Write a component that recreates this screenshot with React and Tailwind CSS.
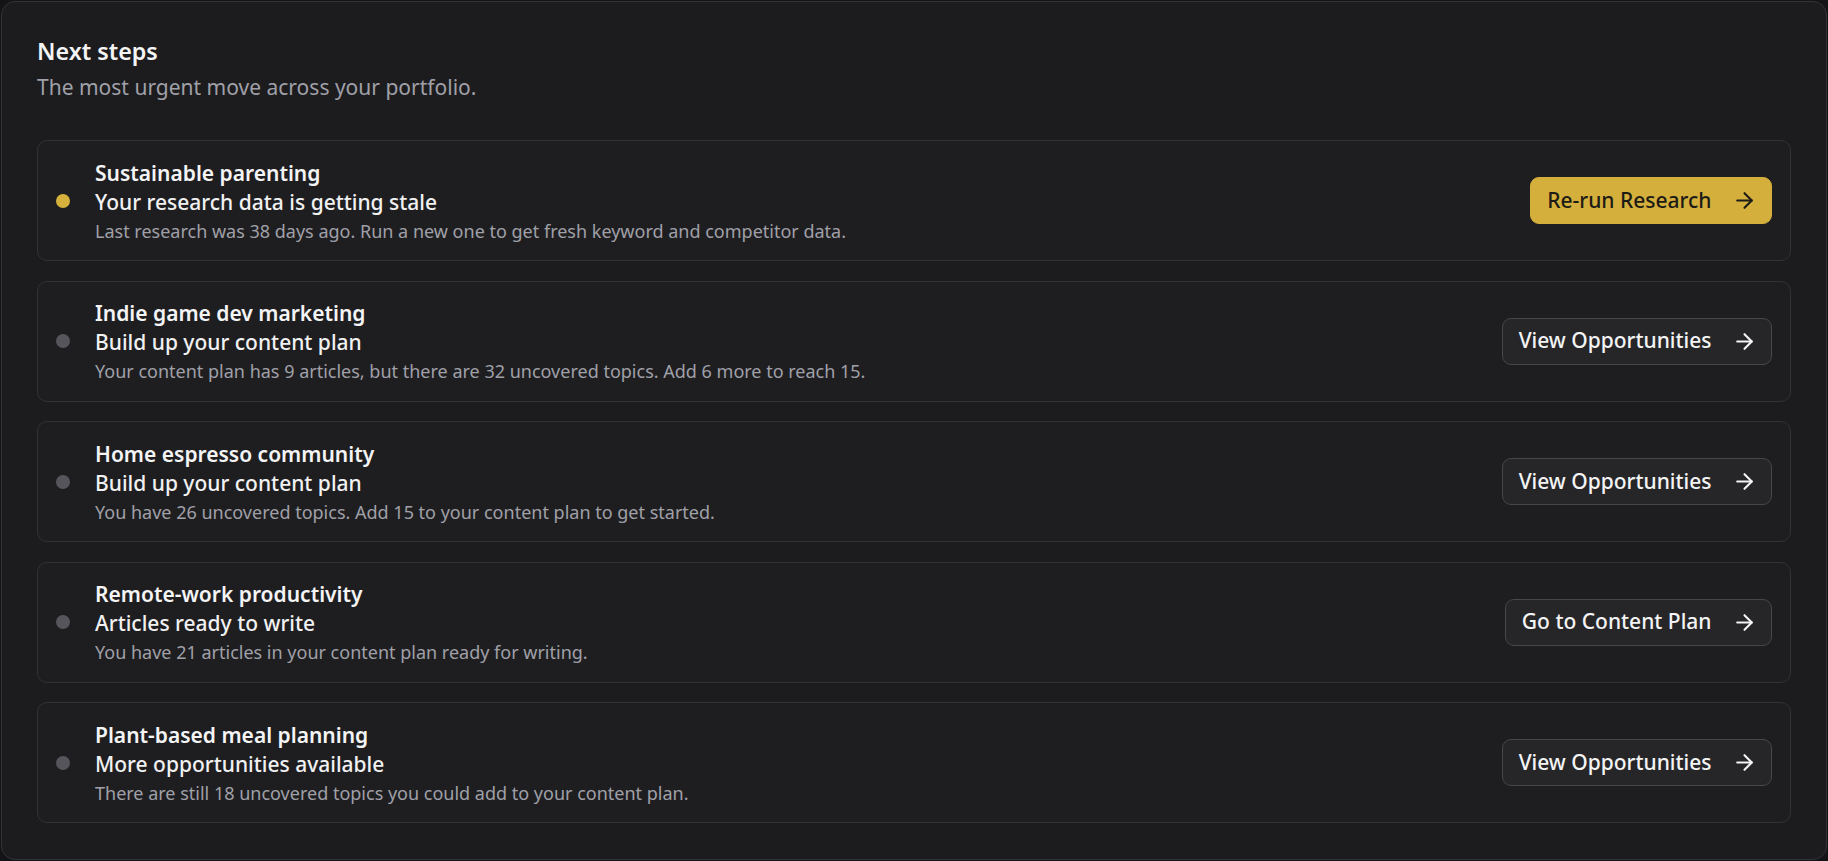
import React from "react";
import { ArrowRight } from "lucide-react";

const steps = [
  {
    project: "Sustainable parenting",
    headline: "Your research data is getting stale",
    detail:
      "Last research was 38 days ago. Run a new one to get fresh keyword and competitor data.",
    action: "Re-run Research",
    urgent: true,
  },
  {
    project: "Indie game dev marketing",
    headline: "Build up your content plan",
    detail:
      "Your content plan has 9 articles, but there are 32 uncovered topics. Add 6 more to reach 15.",
    action: "View Opportunities",
  },
  {
    project: "Home espresso community",
    headline: "Build up your content plan",
    detail: "You have 26 uncovered topics. Add 15 to your content plan to get started.",
    action: "View Opportunities",
  },
  {
    project: "Remote-work productivity",
    headline: "Articles ready to write",
    detail: "You have 21 articles in your content plan ready for writing.",
    action: "Go to Content Plan",
  },
  {
    project: "Plant-based meal planning",
    headline: "More opportunities available",
    detail: "There are still 18 uncovered topics you could add to your content plan.",
    action: "View Opportunities",
  },
];

function StepCard({ step }) {
  return (
    <div className="flex items-center rounded-[10px] border border-[#323236] bg-[#1e1e21] px-[18px] py-[17.5px]">
      <span
        className={
          step.urgent
            ? "h-[14px] w-[14px] shrink-0 rounded-full bg-[#d6b23c]"
            : "h-[14px] w-[14px] shrink-0 rounded-full bg-[#55555b]"
        }
      />
      <div className="ml-[25px] min-w-0 flex-1">
        <div className="text-[21px] font-semibold leading-[29px] text-[#f4f4f5]">
          {step.project}
        </div>
        <div className="text-[21px] font-medium leading-[29px] text-[#f1f1f2]">
          {step.headline}
        </div>
        <div className="mt-[2px] text-[18px] leading-[24px] text-[#a0a0a8]">
          {step.detail}
        </div>
      </div>
      <button
        className={
          step.urgent
            ? "flex h-[47px] shrink-0 items-center gap-[20.5px] rounded-[9px] border border-[#d4af3b] bg-[#d4af3b] pl-[16px] pr-[14px] text-[21px] font-medium text-[#1d1b16]"
            : "flex h-[47px] shrink-0 items-center gap-[20.5px] rounded-[9px] border border-[#46464b] bg-[#262629] pl-[16px] pr-[14px] text-[21px] font-medium text-[#f4f4f5]"
        }
      >
        <span>{step.action}</span>
        <ArrowRight size={25} strokeWidth={2} />
      </button>
    </div>
  );
}

export default function App() {
  return (
    <div
      className="h-[861px] w-full bg-[#141416] p-px"
      style={{ fontFamily: "'Noto Sans', 'Open Sans', sans-serif" }}
    >
      <div className="h-full rounded-[14px] border border-[#333337] bg-[#1c1c1f] p-[35px]">
        <h2 className="text-[23.3px] font-semibold leading-[28px] text-[#f4f4f5]">Next steps</h2>
        <p className="mt-[9px] text-[21px] leading-[27px] text-[#a0a0a8]">
          The most urgent move across your portfolio.
        </p>
        <div className="mt-[39px] flex flex-col gap-[19.5px]">
          {steps.map((step) => (
            <StepCard key={step.project} step={step} />
          ))}
        </div>
      </div>
    </div>
  );
}
